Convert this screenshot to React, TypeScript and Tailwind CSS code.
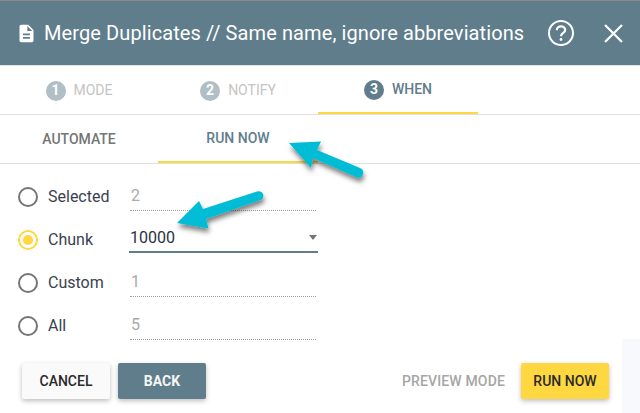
type Row = { label: string; value: string; active?: boolean }

const rows: Row[] = [
  { label: 'Selected', value: '2' },
  { label: 'Chunk', value: '10000', active: true },
  { label: 'Custom', value: '1' },
  { label: 'All', value: '5' },
]

function Step({ n, label, active, width }: { n: number; label: string; active?: boolean; width: string }) {
  return (
    <div
      className={`flex h-full items-center justify-center gap-[8px] ${width} ${
        active ? 'border-b-2 border-[#ffd740]' : ''
      }`}
    >
      <span
        className={`flex h-[20px] w-[20px] shrink-0 items-center justify-center rounded-full text-[14px] font-bold text-white ${
          active ? 'bg-[#607d8b]' : 'bg-[#b0bec5]'
        }`}
      >
        {n}
      </span>
      <span className={`text-[14px] ${active ? 'font-medium text-[#607d8b]' : 'text-[#c4c4c4]'}`}>{label}</span>
    </div>
  )
}

function FormRow({ row }: { row: Row }) {
  return (
    <div className="flex h-[43px] items-center">
      <span
        className={`flex h-[20px] w-[20px] items-center justify-center rounded-full border-2 ${
          row.active ? 'border-[#ffd740]' : 'border-[#757575]'
        }`}
      >
        {row.active && <span className="h-[10px] w-[10px] rounded-full bg-[#ffd740]" />}
      </span>
      <span className="ml-[10px] w-[81px] text-[16px] text-[#3a4150]">{row.label}</span>
      {row.active ? (
        <div className="flex h-[28px] w-[189px] translate-y-[-1px] items-center justify-between border-b-2 border-[#607d8b] pr-[1px] pt-[1px] text-[16px] text-[#2b3242]">
          <span className="pl-[1px]">{row.value}</span>
          <span className="mb-[1px] h-0 w-0 border-x-4 border-t-[5px] border-x-transparent border-t-[#757575]" />
        </div>
      ) : (
        <div className="flex h-[28px] w-[186px] translate-x-[1px] items-center border-b border-dotted border-[#9e9e9e] pl-[1px] text-[16px] text-[#a9a9ad]">
          {row.value}
        </div>
      )}
    </div>
  )
}

export default function App() {
  return (
    <div className="relative h-[413px] w-[640px] overflow-hidden bg-white font-['Roboto',sans-serif]">
      <header className="flex h-[66px] items-center border-b border-t border-b-[#dfe6ea] border-t-[#8a8a8a] bg-[#607d8b] pl-[16px] pr-[17px] text-white">
        <svg viewBox="0 0 24 24" className="h-[21px] w-[21px] shrink-0" fill="currentColor">
          <path d="M14 2H6c-1.1 0-2 .9-2 2v16c0 1.1.9 2 2 2h12c1.100 0 2-.9 2-2V8l-6-6zm2 16H8v-2h8v2zm0-4H8v-2h8v2zm-3-5V3.500L18.500 9H13z" />
        </svg>
        <h1 className="ml-[7px] text-[20px] leading-none tracking-[0.1px]">
          Merge Duplicates // Same name, ignore abbreviations
        </h1>
        <svg viewBox="0 0 28 28" className="ml-auto h-[28px] w-[28px] text-white" fill="none" stroke="currentColor">
          <circle cx="14" cy="14" r="12" strokeWidth="2" />
          <path d="M9.800 11.200c0-2.400 1.900-3.900 4.200-3.900s4.200 1.500 4.200 3.700c0 3-4.200 3-4.200 6.300" strokeWidth="2.200" />
          <circle cx="14" cy="20.500" r="1.400" fill="currentColor" stroke="none" />
        </svg>
        <svg viewBox="0 0 19 19" className="ml-[29px] h-[19px] w-[19px]" fill="none" stroke="currentColor" strokeWidth="2.200">
          <path d="M1 1l17 17M18 1L1 18" />
        </svg>
      </header>

      <nav className="flex h-[49px] items-stretch border-b border-[#e0e0e0] pt-[1px]">
        <Step n={1} label="MODE" width="w-[158px]" />
        <Step n={2} label="NOTIFY" width="w-[160px]" />
        <Step n={3} label="WHEN" width="w-[160px]" active />
      </nav>

      <div className="flex h-[49px] items-stretch border-b border-[#e0e0e0] text-[14px] font-medium">
        <div className="flex w-[158px] items-center justify-center text-[#757575]">AUTOMATE</div>
        <div className="flex w-[160px] items-center justify-center border-b-2 border-[#ffd740] text-[#607d8b]">RUN NOW</div>
      </div>

      <div className="pl-[18px] pt-[11px]">
        {rows.map((row) => (
          <FormRow key={row.label} row={row} />
        ))}
      </div>

      <footer className="mt-[16px] flex items-center pl-[22px] pr-[31px]">
        <button className="h-[36px] w-[88px] rounded-[2px] bg-[#fafafa] text-[14px] font-medium text-[#2a2a2a] shadow-[0_2px_5px_rgba(0,0,0,0.26)]">
          CANCEL
        </button>
        <button className="ml-[8px] h-[36px] w-[88px] rounded-[2px] bg-[#607d8b] text-[14px] font-bold text-[#f5f5f5] shadow-[0_2px_5px_rgba(0,0,0,0.26)]">
          BACK
        </button>
        <span className="ml-auto mr-[16px] text-[14px] font-medium tracking-[0.15px] text-[#a6a6a6]">PREVIEW MODE</span>
        <button className="h-[36px] w-[88px] rounded-[2px] bg-[#ffd740] text-[14px] font-medium text-[#2b2b2b] shadow-[0_2px_5px_rgba(0,0,0,0.26)]">
          RUN NOW
        </button>
      </footer>

      {/* faint panel peeking out bottom right */}
      <div className="absolute bottom-0 right-0 h-[74px] w-[18px] bg-[#f8f9fc]" />

      {/* annotation arrows */}
      <svg viewBox="0 0 640 413" className="pointer-events-none absolute inset-0 h-[413px] w-[640px]" fill="#00bcd4">
        <defs>
          <filter id="arrowShadow" x="-30%" y="-30%" width="170%" height="170%">
            <feDropShadow dx="1" dy="4" stdDeviation="2.500" floodColor="#000" floodOpacity="0.5" />
          </filter>
        </defs>
        <g filter="url(#arrowShadow)">
          <path d="M289 143L321 141.500L317 150L360 168A5 5 0 0 1 357 177.500L313 158L311 168Z" />
        </g>
        <g filter="url(#arrowShadow)">
          <path d="M177 223L199 201L203 209L257 191.500A4.500 4.500 0 0 1 260.500 200L206 219L208.500 228.500Z" />
        </g>
      </svg>
    </div>
  )
}
